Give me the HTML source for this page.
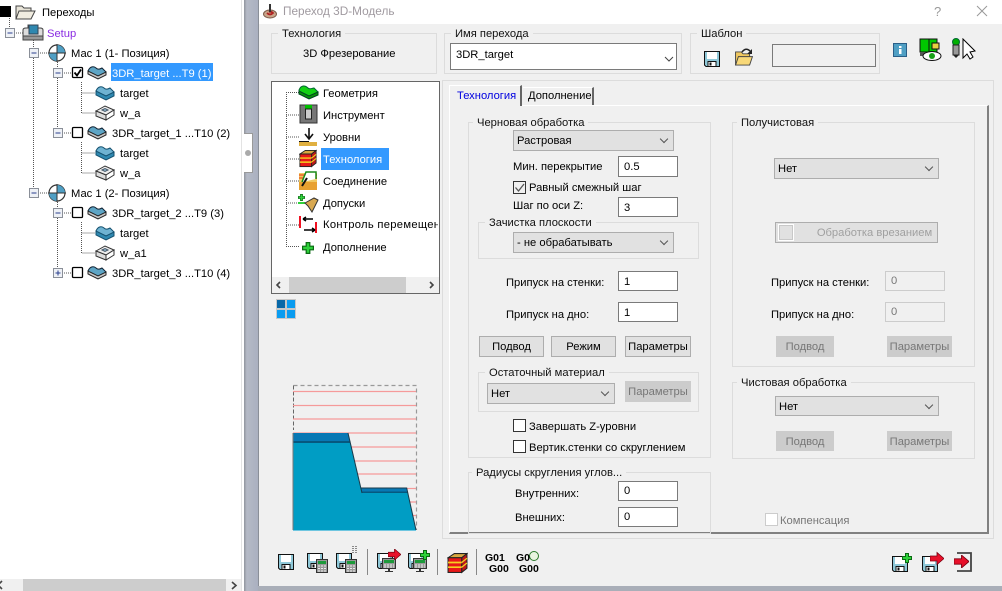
<!DOCTYPE html>
<html><head><meta charset="utf-8"><style>
html,body{margin:0;padding:0;width:1002px;height:591px;overflow:hidden;background:#fff}
body{font-family:"Liberation Sans",sans-serif;font-size:11.2px;color:#000;position:relative}
.a,.t,.g,.c,.i,.b,.k,svg.s{position:absolute;box-sizing:border-box}
.t{white-space:nowrap;line-height:14px;height:14px;margin-top:1px}
.g{border:1px solid #dcdcdc}
.g>span{position:absolute;top:-7px;left:6px;background:#f0f0f0;padding:0 4px;line-height:14px;white-space:nowrap;color:#111}
.c{background:#e1e1e1;border:1px solid #adadad;line-height:21px;padding-left:3px}
.c:after{content:"";position:absolute;right:6px;top:5px;width:5px;height:5px;border-right:1px solid #555;border-bottom:1px solid #555;transform:rotate(45deg)}
.i{background:#fff;border:1px solid #7a7a7a;line-height:16px;padding-left:5px}
.i.d{background:#f0f0f0;border:1px solid #ccc;color:#777}
.b{background:#e1e1e1;border:1px solid #adadad;text-align:center;line-height:21px;white-space:nowrap}
.b.d{background:#ccc;border-color:#ccc;color:#777}
.k{width:13px;height:13px;background:#fff;border:1px solid #333}
</style></head><body>
<svg width="0" height="0" style="position:absolute">
<defs>
<symbol id="shape" viewBox="0 0 20 16"><path d="M1 7 C3 2 7 2 9 4 C11 6 13 5 15 4 L19 8 L12 14 L3 11Z" fill="#5ea5c5" stroke="#123" stroke-width="1"/><path d="M1 7 L1 10 L11 15 L19 11 L19 8 L11 12Z" fill="#c8c8c8" stroke="#222" stroke-width="1"/></symbol>
<symbol id="tgt" viewBox="0 0 20 16"><path d="M1 6 C3 1 7 1 9 3 C11 5 13 4 15 3 L19 7 L12 12 L3 10Z" fill="#6fb3d2" stroke="#14506e"/><path d="M1 6 L1 10 L11 15 L19 11 L19 7 L11 11Z" fill="#2f88b0" stroke="#14506e"/></symbol>
<symbol id="wa" viewBox="0 0 20 16"><path d="M1 6 L10 1 L19 5 L11 10Z" fill="#eee" stroke="#333"/><path d="M1 6 L1 11 L11 15 L11 10Z" fill="#ddd" stroke="#333"/><path d="M11 10 L19 5 L19 10 L11 15Z" fill="#fff" stroke="#333"/><path d="M7 5 L10 3.500 L13 5 L10 6.500Z" fill="#9cc6da" stroke="#456"/></symbol>
<symbol id="mac" viewBox="0 0 18 18"><circle cx="9" cy="9" r="8" fill="#fff" stroke="#333" stroke-width="1.200"/><path d="M9 1 A8 8 0 0 1 17 9 L9 9Z M9 9 L9 17 A8 8 0 0 1 1 9Z" fill="#4f9fc4"/><path d="M9 0V18M0 9H18" stroke="#333"/></symbol>
<symbol id="disk" viewBox="0 0 16 16"><path d="M0.5 0.5H15.5V15.500H2L0.5 14Z" fill="#8fc8d8" stroke="#111"/><rect x="3" y="1" width="10" height="7" fill="#fff"/><rect x="4" y="10.500" width="8" height="5" fill="#fff" stroke="#111"/><rect x="5.500" y="11.500" width="2" height="3" fill="#111"/></symbol>
<symbol id="calc" viewBox="0 0 12 14"><rect x=".5" y=".5" width="11" height="13" fill="#9a9a9a" stroke="#333"/><rect x="2" y="2" width="8" height="3" fill="#1d9a3a"/><path d="M2 7h8M2 9.500h8M2 12h8" stroke="#eee" stroke-dasharray="2 1"/></symbol>
<symbol id="mon" viewBox="0 0 14 15"><rect x=".5" y=".5" width="13" height="10" fill="#9a9a9a" stroke="#333"/><rect x="2" y="2" width="10" height="3" fill="#1d9a3a"/><path d="M2 7h10M2 9h10" stroke="#eee" stroke-dasharray="2 1"/><path d="M6 11h2v2h3v1H3v-1h3z" fill="#333"/></symbol>
<symbol id="arrow" viewBox="0 0 14 12"><path d="M0 3.500H7V0L14 6L7 12V8.500H0Z" fill="#e8102a" stroke="#7a0010" stroke-width=".8"/></symbol>
<symbol id="plus" viewBox="0 0 10 10"><path d="M3.500 .5H6.500V3.500H9.500V6.500H6.500V9.500H3.500V6.500H.5V3.500H3.500Z" fill="#2ed13a" stroke="#0a6a12"/></symbol>
<symbol id="stack" viewBox="0 0 20 20"><path d="M1 5 L7 1 H19 L14 5Z" fill="#d8a840" stroke="#222"/><path d="M14 5 L19 1 V15 L14 19Z" fill="#c01818" stroke="#222"/><rect x="1" y="5" width="13" height="14" fill="#e81818" stroke="#222"/><path d="M1 9.500H14M1 14H14" stroke="#f5d020" stroke-width="1.600"/><path d="M14 9.500L19 5.500M14 14L19 10" stroke="#f5d020" stroke-width="1.200"/></symbol>
<symbol id="folder" viewBox="0 0 20 16"><path d="M1 15V1H7L9 3H16V6" fill="#f0c860" stroke="#444"/><path d="M1 15L4 6H19L16 15Z" fill="#f8d878" stroke="#444"/></symbol>
</defs></svg>

<!-- left pane -->
<div class="a" style="left:0;top:0;width:242px;height:591px;background:#fff"></div>
<div class="a" style="left:241px;top:0;width:1px;height:591px;background:#e3e3e3"></div>
<div class="a" style="left:244px;top:0;width:14px;height:591px;background:linear-gradient(90deg,#8f949c,#b5bac6 20%,#aab0c0)"></div>
<div class="a" style="left:244px;top:133px;width:9px;height:40px;background:#fff;border:1px solid #999;border-left:0"></div>
<div class="a" style="left:245px;top:150px;width:6px;height:6px;border-radius:50%;background:#aaa"></div>

<!-- tree lines -->
<svg class="s" style="left:0;top:0" width="244" height="300"><g stroke="#555" stroke-dasharray="1 1" fill="none">
<path d="M9.500 18V28M14 33H23"/>
<path d="M33.500 40V188M38 53H48M38 193H48"/>
<path d="M57.500 62V68M62 73H72M57.500 78V128M62 133H72"/>
<path d="M81.500 82V113H95M81.500 93H95M81.500 142V173H95M81.500 153H95"/>
<path d="M57.500 202V208M62 213H72M57.500 218V268M62 273H72"/>
<path d="M81.500 222V253H95M81.500 233H95"/>
</g>
<g fill="#eef1f6" stroke="#8a8f98">
<rect x="5.500" y="28.500" width="9" height="9"/><rect x="29.500" y="48.500" width="9" height="9"/><rect x="53.500" y="68.500" width="9" height="9"/><rect x="53.500" y="128.500" width="9" height="9"/><rect x="29.500" y="188.500" width="9" height="9"/><rect x="53.500" y="208.500" width="9" height="9"/><rect x="53.500" y="268.500" width="9" height="9"/>
</g>
<path d="M7.500 33H12.500M31.500 53H36.500M55.500 73H60.500M55.500 133H60.500M31.500 193H36.500M55.500 213H60.500M55.500 273H60.500M58 270.500V275.500" stroke="#2a3f8f"/>
<rect x="0" y="6" width="11" height="11" fill="#000"/>
<path d="M16 19V6H22L24 8H31V11" fill="#e8e4d8" stroke="#444"/><path d="M16 19L19 11H35L31 19Z" fill="#f0ece0" stroke="#444"/>
<path d="M23 36V30Q23 28 26 28H28V25H38V28H40Q43 28 43 30V36Z" fill="#ddd" stroke="#444"/><rect x="29" y="25" width="9" height="9" fill="#2f88b0" stroke="#345"/><rect x="23" y="36" width="20" height="4" fill="#999" stroke="#444"/>
<use href="#mac" x="48" y="44" width="18" height="18"/><use href="#mac" x="48" y="184" width="18" height="18"/>
<g fill="#fff" stroke="#000" stroke-width="1.300"><rect x="72.500" y="67.500" width="10" height="10" rx="1"/><rect x="72.500" y="127.500" width="10" height="10" rx="1"/><rect x="72.500" y="207.500" width="10" height="10" rx="1"/><rect x="72.500" y="267.500" width="10" height="10" rx="1"/></g>
<path d="M74.500 72.500L77 75.500L81 69.500" fill="none" stroke="#000" stroke-width="1.800"/>
<use href="#shape" x="87" y="64" width="20" height="16"/><use href="#shape" x="87" y="124" width="20" height="16"/><use href="#shape" x="87" y="204" width="20" height="16"/><use href="#shape" x="87" y="264" width="20" height="16"/>
<use href="#tgt" x="95" y="85" width="20" height="16"/><use href="#tgt" x="95" y="145" width="20" height="16"/><use href="#tgt" x="95" y="225" width="20" height="16"/>
<use href="#wa" x="95" y="105" width="20" height="16"/><use href="#wa" x="95" y="165" width="20" height="16"/><use href="#wa" x="95" y="245" width="20" height="16"/>
</svg>
<div class="t" style="left:42px;top:5px">Переходы</div>
<div class="t" style="left:47px;top:26px;color:#8a2be2">Setup</div>
<div class="t" style="left:71px;top:46px">Мас 1 (1- Позиция)</div>
<div class="a" style="left:111px;top:63px;width:102px;height:18px;background:#3399ff"></div>
<div class="t" style="left:112px;top:66px;color:#fff">3DR_target ...T9 (1)</div>
<div class="t" style="left:120px;top:86px">target</div>
<div class="t" style="left:120px;top:106px">w_a</div>
<div class="t" style="left:112px;top:126px">3DR_target_1 ...T10 (2)</div>
<div class="t" style="left:120px;top:146px">target</div>
<div class="t" style="left:120px;top:166px">w_a</div>
<div class="t" style="left:71px;top:186px">Мас 1 (2- Позиция)</div>
<div class="t" style="left:112px;top:206px">3DR_target_2 ...T9 (3)</div>
<div class="t" style="left:120px;top:226px">target</div>
<div class="t" style="left:120px;top:246px">w_a1</div>
<div class="t" style="left:112px;top:266px">3DR_target_3 ...T10 (4)</div>
<!-- left scrollbar -->
<div class="a" style="left:0;top:579px;width:241px;height:12px;background:#f0f0f0"></div>
<div class="a" style="left:23px;top:579px;width:203px;height:12px;background:#cdcdcd"></div>
<svg class="s" style="left:0;top:579px" width="241" height="12"><path d="M2 2L-2 6L2 10M232 3L236 6.500L232 10" fill="none" stroke="#444" stroke-width="1.600"/></svg>

<!-- dialog -->
<div class="a" style="left:258px;top:0;width:744px;height:586px;background:#f0f0f0;border-left:1px solid #8a8f98"></div>
<div class="a" style="left:259px;top:0;width:743px;height:24px;background:#fff"></div>
<div class="a" style="left:258px;top:586px;width:744px;height:5px;background:#a9aeb8"></div>
<svg class="s" style="left:262px;top:3px" width="16" height="16"><ellipse cx="8" cy="11" rx="6.500" ry="4" fill="#c9a58a" stroke="#7a5a48"/><path d="M5 10Q8 13 11 10Q9 8 7 9" fill="none" stroke="#b02020" stroke-width="1.800"/><rect x="7" y="1" width="2" height="8" fill="#333"/></svg>
<div class="t" style="left:283px;top:3px;color:#a09aa0;font-size:11.8px">Переход 3D-Модель</div>
<div class="t" style="left:934px;top:4px;color:#999;font-size:13px">?</div>
<svg class="s" style="left:976px;top:5px" width="12" height="12"><path d="M1 1L11 11M11 1L1 11" stroke="#999"/></svg>

<div class="g" style="left:271px;top:33px;width:166px;height:41px"><span style="left:6px">Технология</span></div>
<div class="t" style="left:303px;top:46px">3D Фрезерование</div>
<div class="g" style="left:444px;top:33px;width:238px;height:41px"><span>Имя перехода</span></div>
<div class="i" style="left:450px;top:43px;width:227px;height:27px;line-height:22px">3DR_target</div>
<svg class="s" style="left:664px;top:56px" width="10" height="7"><path d="M1 1L5 5L9 1" fill="none" stroke="#444"/></svg>
<div class="g" style="left:690px;top:33px;width:190px;height:41px"><span>Шаблон</span></div>
<svg class="s" style="left:704px;top:47px" width="52" height="21"><use href="#disk" x="0" y="4" width="16" height="16"/><use href="#folder" x="30" y="4" width="20" height="15"/><path d="M38 5Q42 0 46 4" fill="none" stroke="#222" stroke-width="1.500"/><path d="M48 2V7H43Z" fill="#222"/></svg>
<div class="a" style="left:772px;top:44px;width:104px;height:23px;background:#f0f0f0;border:1px solid #7a7a7a"></div>
<svg class="s" style="left:892px;top:38px" width="85" height="24">
<rect x="1.500" y="5.500" width="13" height="13" fill="#4f9fc4" stroke="#2a5f88"/><rect x="7" y="8" width="2.500" height="2" fill="#fff"/><rect x="7" y="11" width="2.500" height="5" fill="#fff"/>
<rect x="28" y="1" width="17" height="13" fill="#00c800" stroke="#111"/><rect x="28" y="14" width="17" height="4" fill="#555"/><rect x="40" y="5" width="7" height="6" fill="#e8d040" stroke="#111"/><path d="M37 1V14" stroke="#111"/><ellipse cx="40" cy="18" rx="9" ry="4.500" fill="#fff" stroke="#111"/><circle cx="40" cy="18" r="3" fill="#18a018"/>
<circle cx="64" cy="4" r="3.500" fill="#00b000" stroke="#063"/><rect x="61" y="7" width="6" height="10" fill="#999" stroke="#222"/><path d="M61 17L64 20L67 17Z" fill="#222"/>
<path d="M71 1V20L75 16L78 21L81 19L78 14L83 13Z" fill="#fff" stroke="#000"/></svg>

<!-- tree box -->
<div class="a" style="left:271px;top:81px;width:169px;height:213px;background:#fff;border:1px solid #666"></div>
<svg class="s" style="left:272px;top:82px" width="167" height="195"><path d="M14 10.500H28M14.500 10V164M14 33H28M14 55H28M14 77H28M14 99H28M14 121H28M14 143H28M14 164.500H28" stroke="#555" stroke-dasharray="1 1" fill="none"/>
<path d="M27 8C29 3 33 3 36 6C38 8 40 6 42 6L46 10L36 15L27 12Z" fill="#14d014" stroke="#063"/><path d="M27 9V12L37 17L46 13V10L37 14Z" fill="#0a900a" stroke="#042"/>
<rect x="28" y="23" width="17" height="18" fill="#777" stroke="#333"/><rect x="33" y="23" width="7" height="4" fill="#00c000"/><rect x="33.500" y="27" width="6" height="10" fill="#ccc" stroke="#222"/>
<path d="M37 46V56M33 52L37 57L41 52" fill="none" stroke="#111" stroke-width="1.600"/><rect x="27" y="60" width="18" height="4" fill="#e0b040"/><rect x="27" y="59" width="10" height="1" fill="#111"/>
<use href="#stack" x="27" y="67" width="18" height="19"/>
<rect x="27" y="91" width="18" height="9" fill="#f0c860"/><rect x="27" y="100" width="18" height="8" fill="#e8a030"/><path d="M27 96H45M27 93H45" stroke="#e83010"/><path d="M30 100L34 90H44V97" fill="#fff" stroke="#1a8a1a" stroke-width="1.500"/><path d="M30 104L35 96" stroke="#111" stroke-width="2"/>
<use href="#plus" x="26" y="112" width="7" height="7"/><rect x="26" y="120" width="7" height="2" fill="#2ed13a"/><path d="M33 121L42 116L46 118L40 130L36 124Z" fill="#d8a850" stroke="#333"/>
<path d="M28 134V146" stroke="#f01020" stroke-width="2"/><path d="M31 137H41M31 137L34 135M31 137L34 139" stroke="#000" stroke-width="1.500"/><path d="M44 140V151" stroke="#f01020" stroke-width="2"/><path d="M32 148H43M43 148L40 146M43 148L40 150" stroke="#000" stroke-width="1.500"/>
<use href="#plus" x="30" y="160" width="12" height="12"/>
</svg>
<div class="t" style="left:323px;top:86px">Геометрия</div>
<div class="t" style="left:323px;top:108px">Инструмент</div>
<div class="t" style="left:323px;top:130px">Уровни</div>
<div class="a" style="left:321px;top:148px;width:68px;height:22px;background:#3399ff"></div>
<div class="t" style="left:323px;top:152px;color:#fff">Технология</div>
<div class="t" style="left:323px;top:174px">Соединение</div>
<div class="t" style="left:323px;top:196px">Допуски</div>
<div class="a" style="left:323px;top:218px;width:115px;height:14px;overflow:hidden;white-space:nowrap;line-height:14px;letter-spacing:.3px">Контроль перемещений</div>
<div class="t" style="left:323px;top:240px">Дополнение</div>
<div class="a" style="left:272px;top:277px;width:167px;height:16px;background:#f0f0f0"></div>
<div class="a" style="left:289px;top:277px;width:117px;height:16px;background:#cdcdcd"></div>
<svg class="s" style="left:272px;top:277px" width="167" height="16"><path d="M8 5L5 8L8 11M158 5L161 8L158 11" fill="none" stroke="#444" stroke-width="1.600"/></svg>
<svg class="s" style="left:276px;top:299px" width="20" height="20"><rect width="20" height="20" fill="#c8c8c8"/><rect x="1" y="1" width="8" height="8" fill="#0868a8"/><rect x="11" y="1" width="8" height="8" fill="#0a9cf0"/><rect x="1" y="11" width="8" height="8" fill="#0a9cf0"/><rect x="11" y="11" width="8" height="8" fill="#0a9cf0"/></svg>

<!-- preview -->
<svg class="s" style="left:290px;top:382px" width="130" height="152">
<path d="M3.500 3.500H126.500V148" fill="none" stroke="#999" stroke-dasharray="4 3" stroke-width="1.200"/><path d="M3.500 3.500V48" fill="none" stroke="#666" stroke-dasharray="4 2"/>
<g stroke="#f59a9a" stroke-width="1.200"><path d="M3 9.500H126M3 23.500H126M3 37H126M3 51H126M3 65H126M3 79H126M3 92H126M3 106.500H126M3 120H126M3 133.500H126"/></g>
<path d="M3 51H58L72 111H118L126 148H3Z" fill="#009dc4"/>
<path d="M3 51H58L60.300 61H3Z" fill="#0878b4"/><rect x="3" y="59" width="57.500" height="2" fill="#06587e"/>
<path d="M70.800 106H116.700L117.800 111H72Z" fill="#0878b4"/><rect x="71.500" y="109.500" width="46" height="1.500" fill="#06587e"/>
<path d="M58 51L72 111M71 106H116.700L126 148" fill="none" stroke="#1a3a4a" stroke-width="1"/>
<path d="M3 51V148" stroke="#777"/><path d="M3 148.500H126" stroke="#6fc6e0"/>
</svg>

<!-- tab panel -->
<div class="a" style="left:442px;top:80px;width:552px;height:459px;border:1px solid #dcdcdc"></div>
<div class="a" style="left:449px;top:105px;width:540px;height:429px;border:2px solid #808080;border-top:1px solid #fff;border-left:1px solid #fff;background:#f0f0f0"></div>
<div class="a" style="left:449px;top:85px;width:73px;height:21px;background:#f0f0f0;border:1px solid #fff;border-right:2px solid #666;border-bottom:0;z-index:1"></div>
<div class="a" style="left:523px;top:87px;width:71px;height:18px;background:#f0f0f0;border-top:1px solid #fff;border-right:2px solid #666"></div>
<div class="t" style="left:457px;top:88px;color:#0000e0;z-index:2">Технология</div>
<div class="t" style="left:528px;top:88px;z-index:2">Дополнение</div>

<div class="g" style="left:468px;top:122px;width:243px;height:336px"><span style="left:4px">Черновая обработка</span></div>
<div class="c" style="left:513px;top:130px;width:161px;height:21px">Растровая</div>
<div class="t" style="left:513px;top:159px">Мин. перекрытие</div>
<div class="i" style="left:618px;top:156px;width:60px;height:21px;line-height:20px">0.5</div>
<div class="k" style="left:513px;top:181px;background:#f0f0f0"></div>
<svg class="s" style="left:513px;top:181px" width="13" height="13"><path d="M2.500 6.500L5.500 10L11 3" fill="none" stroke="#555" stroke-width="1.300"/></svg>
<div class="t" style="left:529px;top:180px">Равный смежный шаг</div>
<div class="t" style="left:513px;top:198px">Шаг по оси Z:</div>
<div class="i" style="left:618px;top:197px;width:60px;height:20px;line-height:20px">3</div>
<div class="g" style="left:478px;top:222px;width:221px;height:37px"><span style="left:6px">Зачистка плоскости</span></div>
<div class="c" style="left:513px;top:232px;width:161px;height:21px">- не обрабатывать</div>
<div class="t" style="left:506px;top:275px">Припуск на стенки:</div>
<div class="i" style="left:618px;top:271px;width:60px;height:20px;line-height:20px">1</div>
<div class="t" style="left:506px;top:307px">Припуск на дно:</div>
<div class="i" style="left:618px;top:302px;width:60px;height:20px;line-height:20px">1</div>
<div class="b" style="left:479px;top:336px;width:65px;height:21px">Подвод</div>
<div class="b" style="left:551px;top:336px;width:65px;height:21px">Режим</div>
<div class="b" style="left:625px;top:336px;width:66px;height:21px">Параметры</div>
<div class="g" style="left:478px;top:372px;width:221px;height:40px"><span style="left:6px">Остаточный материал</span></div>
<div class="c" style="left:487px;top:383px;width:128px;height:21px">Нет</div>
<div class="b d" style="left:625px;top:381px;width:66px;height:21px">Параметры</div>
<div class="k" style="left:513px;top:419px"></div>
<div class="t" style="left:529px;top:419px">Завершать Z-уровни</div>
<div class="k" style="left:513px;top:440px"></div>
<div class="t" style="left:529px;top:440px">Вертик.стенки со скруглением</div>
<div class="g" style="left:468px;top:472px;width:243px;height:62px"><span style="left:3px">Радиусы скругления углов...</span></div>
<div class="t" style="left:515px;top:486px">Внутренних:</div>
<div class="i" style="left:618px;top:481px;width:60px;height:20px;line-height:18px">0</div>
<div class="t" style="left:515px;top:510px">Внешних:</div>
<div class="i" style="left:618px;top:507px;width:60px;height:20px;line-height:18px">0</div>

<div class="g" style="left:732px;top:122px;width:243px;height:245px"><span style="left:4px">Получистовая</span></div>
<div class="c" style="left:774px;top:158px;width:165px;height:21px">Нет</div>
<div class="b d" style="left:775px;top:222px;width:163px;height:21px;background:#e1e1e1;border-color:#adadad;color:#a0a0a0;padding-left:36px">Обработка врезанием</div>
<div class="a" style="left:778px;top:224px;width:16px;height:17px;border:1px solid #fff;outline:1px solid #c8c8c8;outline-offset:-2px"></div>
<div class="t" style="left:771px;top:275px">Припуск на стенки:</div>
<div class="i d" style="left:885px;top:271px;width:60px;height:20px;line-height:18px">0</div>
<div class="t" style="left:771px;top:307px">Припуск на дно:</div>
<div class="i d" style="left:885px;top:302px;width:60px;height:20px;line-height:18px">0</div>
<div class="b d" style="left:776px;top:336px;width:58px;height:21px">Подвод</div>
<div class="b d" style="left:887px;top:336px;width:65px;height:21px">Параметры</div>
<div class="g" style="left:732px;top:382px;width:243px;height:77px"><span style="left:4px">Чистовая обработка</span></div>
<div class="c" style="left:775px;top:396px;width:164px;height:20px;line-height:20px">Нет</div>
<div class="b d" style="left:776px;top:431px;width:58px;height:20px;line-height:20px">Подвод</div>
<div class="b d" style="left:887px;top:431px;width:65px;height:20px;line-height:20px">Параметры</div>
<div class="k" style="left:765px;top:513px;background:#fff;border-color:#ccc"></div>
<div class="t" style="left:780px;top:513px;color:#777">Компенсация</div>

<!-- bottom toolbar -->
<svg class="s" style="left:265px;top:540px" width="737" height="40">
<use href="#disk" x="13" y="14" width="16" height="16"/>
<use href="#disk" x="42" y="13" width="16" height="16"/><use href="#calc" x="51" y="19" width="12" height="14"/>
<use href="#disk" x="71" y="13" width="16" height="16"/><use href="#calc" x="80" y="19" width="12" height="14"/>
<path d="M88 6V13M91 6V13" stroke="#222" stroke-dasharray="1 1"/>
<path d="M102.500 9V35M172.500 9V35M211.500 9V35" stroke="#888"/>
<use href="#disk" x="112" y="13" width="16" height="16"/><use href="#mon" x="117" y="18" width="14" height="15"/><use href="#arrow" x="123" y="9" width="13" height="11"/>
<use href="#disk" x="143" y="13" width="16" height="16"/><use href="#mon" x="148" y="18" width="14" height="15"/><use href="#plus" x="155" y="10" width="10" height="10"/>
<use href="#stack" x="182" y="12" width="21" height="22"/>
<circle cx="269" cy="16" r="4.500" fill="#e8f4e0" stroke="#2a7a2a"/>
<use href="#disk" x="627" y="16" width="16" height="16"/><use href="#plus" x="637" y="13" width="10" height="10"/>
<use href="#disk" x="657" y="16" width="16" height="16"/><use href="#arrow" x="665" y="11" width="14" height="15"/>
<path d="M692 13H706V31H692" fill="none" stroke="#444" stroke-width="1.800"/><use href="#arrow" x="689" y="15" width="15" height="13"/>
</svg>
<div class="t" style="left:485px;top:550px;font-weight:bold;font-size:10.500px">G01</div>
<div class="t" style="left:489px;top:561px;font-weight:bold;font-size:10.500px">G00</div>
<div class="t" style="left:516px;top:550px;font-weight:bold;font-size:10.500px">G0</div>
<div class="t" style="left:519px;top:561px;font-weight:bold;font-size:10.500px">G00</div>
</body></html>
